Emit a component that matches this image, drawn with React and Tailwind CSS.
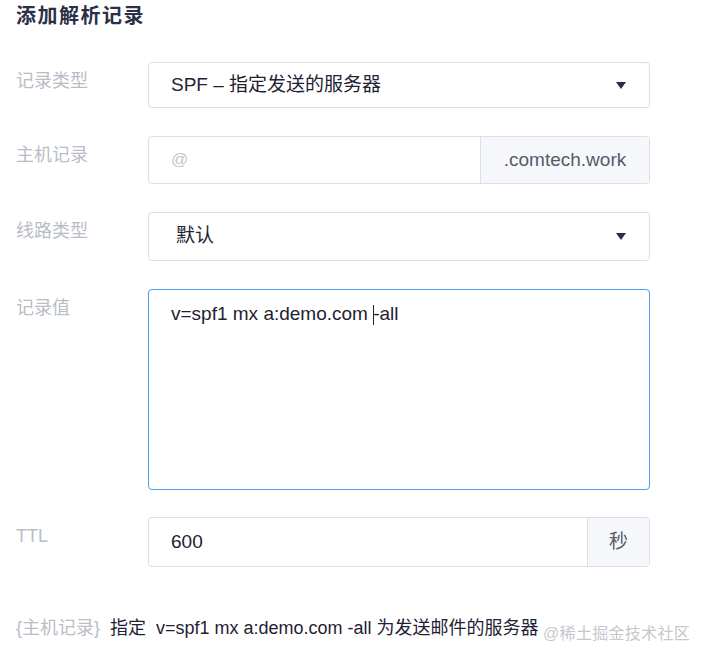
import React from "react";

const font = { fontFamily: '"Liberation Sans", "Noto Sans CJK SC", sans-serif' };

const Caret = () => (
  <svg width="12" height="9" viewBox="0 0 12 9" className="shrink-0">
    <path d="M1 1 L11 1 L6 8 Z" fill="#2a2d4a" />
  </svg>
);

const Row = ({ label, children, mb = "mb-[28px]" }) => (
  <div className={`flex ${mb}`}>
    <div className="w-[132px] shrink-0 pt-[6px] text-[18px] text-[#b9bdc6]">{label}</div>
    <div className="w-[502px]">{children}</div>
  </div>
);

const App = () => {
  return (
    <div className="w-[706px] h-[658px] bg-white overflow-hidden relative" style={font}>
      <div className="pl-[16px] pt-[3px]">
        <h1 className="text-[20px] font-bold text-[#2b3047] tracking-[1.5px] leading-[26px] mb-[33px]">添加解析记录</h1>

        <Row label="记录类型">
          <div className="h-[46px] border border-[#dcdfe5] rounded-[4px] flex items-center justify-between pl-[22px] pr-[22px] text-[19px] text-[#1f2233]">
            <span>SPF – 指定发送的服务器</span>
            <Caret />
          </div>
        </Row>

        <Row label="主机记录">
          <div className="h-[48px] border border-[#dcdfe5] rounded-[4px] flex overflow-hidden">
            <div className="flex-1 flex items-center pl-[22px] text-[17px] text-[#c3c6cc]">@</div>
            <div className="w-[169px] bg-[#f5f7fa] border-l border-[#dcdfe5] flex items-center justify-center text-[19px] text-[#565b6b]">.comtech.work</div>
          </div>
        </Row>

        <Row label="线路类型">
          <div className="h-[49px] border border-[#dcdfe5] rounded-[4px] flex items-center justify-between pl-[27px] pr-[22px] text-[19px] text-[#1f2233]">
            <span>默认</span>
            <Caret />
          </div>
        </Row>

        <Row label="记录值" mb="mb-[27px]">
          <div className="h-[201px] border border-[#4a9cf0] rounded-[4px] pl-[22px] pt-[10px] text-[19px] text-[#1f2233]">
            v=spf1 mx a:demo.com <span className="inline-block w-[1px] h-[20px] bg-[#1f2233] align-middle -mr-[1px]"></span>-all
          </div>
        </Row>

        <Row label="TTL" mb="mb-[49px]">
          <div className="h-[50px] border border-[#dcdfe5] rounded-[4px] flex overflow-hidden">
            <div className="flex-1 flex items-center pl-[22px] text-[19px] text-[#1f2233]">600</div>
            <div className="w-[62px] bg-[#f5f7fa] border-l border-[#dcdfe5] flex items-center justify-center text-[19px] text-[#565b6b]">秒</div>
          </div>
        </Row>

        <p className="text-[18px] leading-[24px] text-[#1f2233] whitespace-nowrap">
          <span className="text-[#b9bdc6] mr-[10px]">{"{主机记录}"}</span>指定&nbsp; v=spf1 mx a:demo.com -all 为发送邮件的服务器
        </p>
      </div>
      <div className="absolute right-[16px] top-[622px] text-[16px] tracking-[0.3px] text-[#c5c8cc]">@稀土掘金技术社区</div>
    </div>
  );
};

export default App;
